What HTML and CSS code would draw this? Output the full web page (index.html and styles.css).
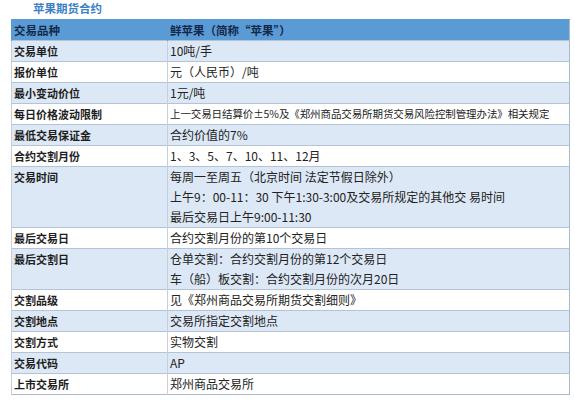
FILE: index.html
```html
<!DOCTYPE html>
<html lang="zh">
<head>
<meta charset="utf-8">
<link rel="stylesheet" href="styles.css">
</head>
<body>
<div class="page">
  <h1 class="title">苹果期货合约</h1>
  <table class="spec">
    <colgroup><col class="c1"><col class="c2"></colgroup>
    <tr class="head"><th>交易品种</th><th>鲜苹果（简称“苹果”）</th></tr>
    <tr class="alt"><td class="k">交易单位</td><td>10吨/手</td></tr>
    <tr><td class="k">报价单位</td><td>元（人民币）/吨</td></tr>
    <tr class="alt"><td class="k">最小变动价位</td><td>1元/吨</td></tr>
    <tr><td class="k">每日价格波动限制</td><td class="tight">上一交易日结算价±5%及《郑州商品交易所期货交易风险控制管理办法》相关规定</td></tr>
    <tr class="alt"><td class="k">最低交易保证金</td><td>合约价值的7%</td></tr>
    <tr><td class="k">合约交割月份</td><td>1、3、5、7、10、11、12月</td></tr>
    <tr class="alt"><td class="k">交易时间</td><td>每周一至周五（北京时间 法定节假日除外）<br>上午9：00-11：30 下午1:30-3:00及交易所规定的其他交 易时间<br>最后交易日上午9:00-11:30</td></tr>
    <tr><td class="k">最后交易日</td><td>合约交割月份的第10个交易日</td></tr>
    <tr class="alt"><td class="k">最后交割日</td><td>仓单交割：合约交割月份的第12个交易日<br>车（船）板交割：合约交割月份的次月20日</td></tr>
    <tr><td class="k">交割品级</td><td>见《郑州商品交易所期货交割细则》</td></tr>
    <tr class="alt"><td class="k">交割地点</td><td>交易所指定交割地点</td></tr>
    <tr><td class="k">交割方式</td><td>实物交割</td></tr>
    <tr class="alt"><td class="k">交易代码</td><td>AP</td></tr>
    <tr><td class="k">上市交易所</td><td>郑州商品交易所</td></tr>
  </table>
</div>
</body>
</html>
```

FILE: styles.css
```css
html, body {
  margin: 0;
  padding: 0;
  background: #ffffff;
}
.page {
  padding: 0 0 0 11px;
  font-family: "Noto Sans CJK SC", "Liberation Sans", sans-serif;
  color: #222;
}
.title {
  margin: 0 0 0 22px;
  height: 19px;
  line-height: 16px;
  font-size: 11.5px;
  font-weight: bold;
  color: #3c7fc6;
}
.spec {
  width: 558px;
  table-layout: fixed;
  border-collapse: collapse;
  border: 1px solid #a9b9c9;
  font-size: 12px;
}
.spec .c1 { width: 156px; }
.spec .c2 { width: 402px; }
.spec th, .spec td {
  border-top: 1px solid #b3c4d6;
  border-left: 1px solid #c4d0dc;
  padding: 0 2px;
  line-height: 20px;
  text-align: left;
  vertical-align: top;
  white-space: nowrap;
  overflow: hidden;
}
.spec .head th {
  background: #5b9bd5;
  color: #14284a;
  font-weight: bold;
  font-size: 11.5px;
  border-color: #5b9bd5;
}
.spec .k {
  font-weight: bold;
  font-size: 11px;
  color: #1e1e1e;
}
.spec .tight {
  font-size: 10.5px;
  letter-spacing: -0.1px;
}
.spec .alt td {
  background: #dde8f6;
}
```
